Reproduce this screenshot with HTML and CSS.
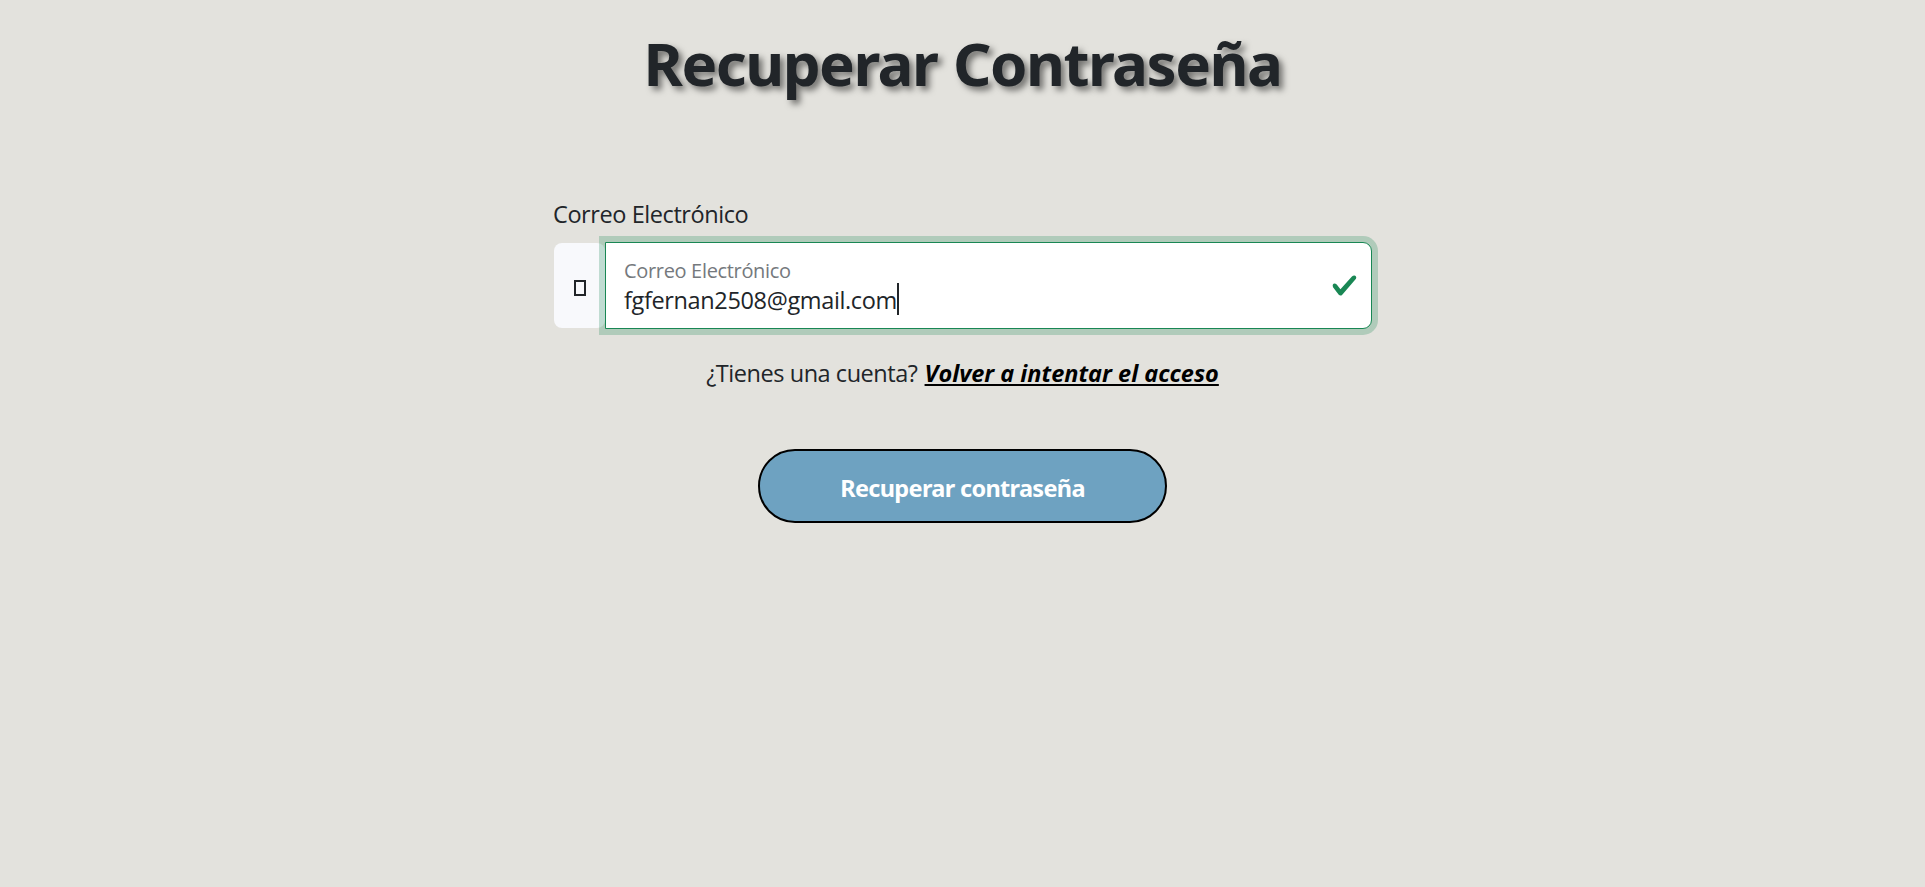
FILE: index.html
```html
<!DOCTYPE html>
<html lang="es">
<head>
<meta charset="utf-8">
<title>Recuperar Contraseña</title>
<link rel="stylesheet" href="styles.css">
</head>
<body>
<main class="page">
  <h1 class="title"><span>Recuperar Contraseña</span></h1>
  <form class="form">
    <label class="label"><span>Correo Electrónico</span></label>
    <div class="group">
      <div class="addon"><span class="glyph"></span></div>
      <div class="field">
        <div class="field-text">
          <span class="floating">Correo Electrónico</span>
          <span class="value"><span class="email">fgfernan2508@gmail.com</span><i class="caret"></i></span>
        </div>
        <svg class="check" viewBox="0 0 8 8"><path fill="#198754" d="M2.3 6.73.6 4.53c-.4-1.04.46-1.4 1.1-.8l1.1 1.4 3.4-3.8c.6-.63 1.6-.27 1.2.7l-4 4.6c-.43.5-.8.4-1.1.1z"/></svg>
      </div>
    </div>
    <p class="hint"><span class="question">¿Tienes una cuenta?</span><a class="link">Volver a intentar el acceso</a></p>
    <button class="submit" type="button"><span>Recuperar contraseña</span></button>
  </form>
</main>
</body>
</html>
```
FILE: styles.css
```css
* { box-sizing: border-box; }
body {
  margin: 0;
  min-height: 887px;
  background: #e3e2dd;
  color: #212529;
  font-family: "Segoe UI", "Open Sans", sans-serif;
  font-size: 23.5px;
  line-height: 36px;
}
.page { display: flex; flex-direction: column; align-items: center; padding-top: 27px; }
.title {
  margin: 0;
  font-family: "Segoe UI", "Noto Sans", sans-serif;
  font-size: 60px;
  line-height: 72px;
  font-weight: 700;
  letter-spacing: -1.5px;
  word-spacing: 1.5px;
  white-space: nowrap;
  text-shadow: 4px 4px 6px rgba(0, 0, 0, .5);
}
.form { width: 819px; margin: 97px 0 0; display: flex; flex-direction: column; }
.label { height: 36px; line-height: 36px; letter-spacing: -.42px; }
.group { display: flex; align-items: center; margin-top: 10px; padding-left: 1px; }
.addon {
  width: 51px;
  height: 85px;
  background: #f8f9fc;
  border-radius: 8px;
  display: flex;
  align-items: center;
  justify-content: center;
}
.glyph { width: 12px; height: 16px; border: 2px solid #212529; margin: 5px 0 0 1px; }
.field {
  flex: 1;
  height: 87px;
  background: #fff;
  border: 1px solid #198754;
  border-radius: 0 9px 9px 0;
  box-shadow: 0 0 0 6px rgba(25, 135, 84, .25);
  padding: 0 13px 0 18px;
  display: flex;
  align-items: center;
  justify-content: space-between;
}
.field-text { display: flex; flex-direction: column; padding-top: 2px; }
.floating { font-size: 20px; line-height: 24px; color: #75797d; letter-spacing: -.33px; }
.value { display: flex; align-items: center; height: 32px; line-height: 32px; letter-spacing: -.36px; }
.email { padding-top: 2px; }
.caret { width: 2px; height: 32px; background: #212529; }
.check { width: 27px; height: 27px; }
.hint { margin: 26px 0 0; height: 36px; display: flex; justify-content: center; gap: 7px; white-space: nowrap; }
.question { letter-spacing: -.45px; }
.link { color: #000; font-weight: 700; font-style: italic; text-decoration: underline; text-decoration-thickness: 2px; text-underline-offset: 2px; text-decoration-skip-ink: none; }
.submit {
  align-self: center;
  width: 409px;
  height: 74px;
  margin-top: 58px;
  padding: 3px 0 0;
  border: 2px solid #000;
  border-radius: 37px;
  background: #6ea2c1;
  color: #fff;
  font: 700 23.5px/36px "Segoe UI", "Noto Sans", sans-serif;
  letter-spacing: -.67px;
}
```
